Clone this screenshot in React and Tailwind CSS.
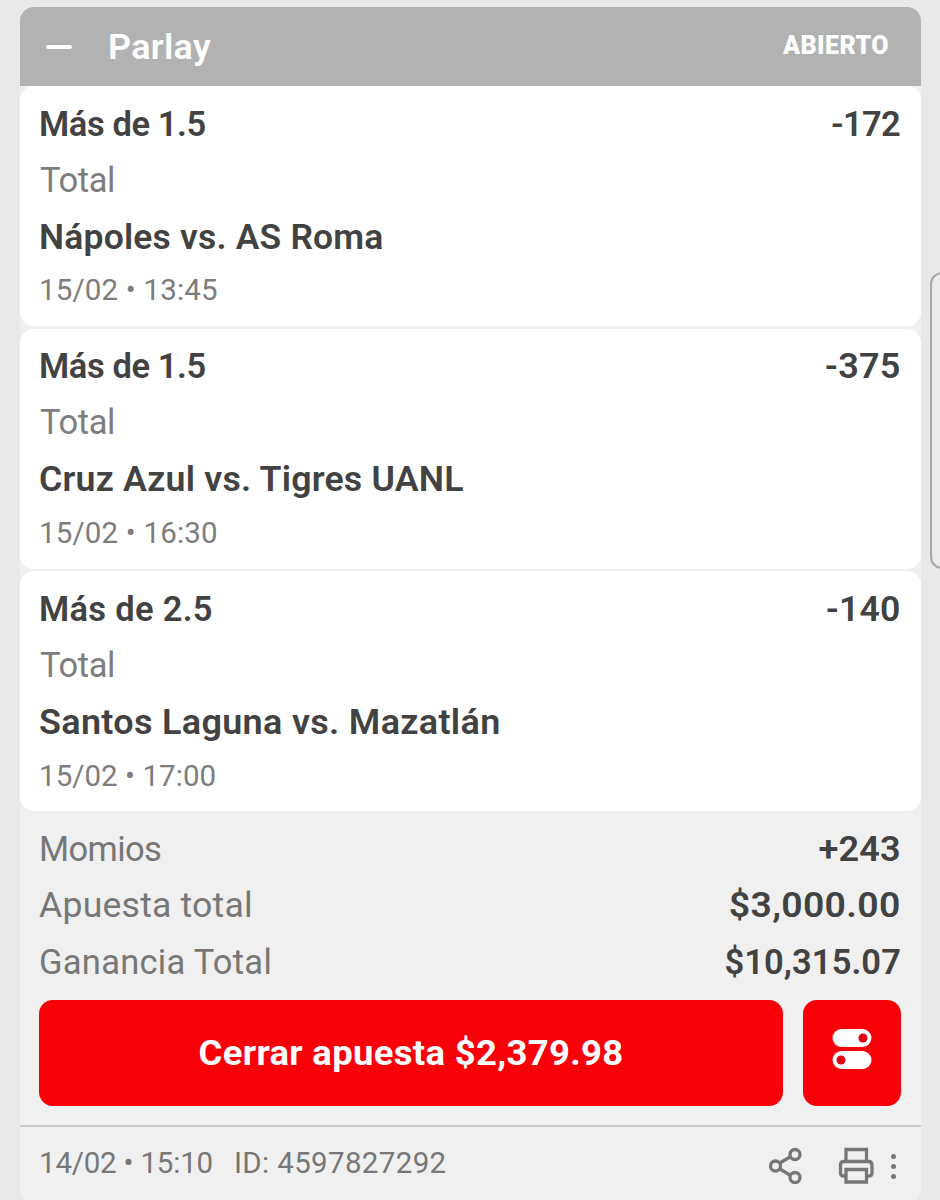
const selections = [
  { pick: "Más de 1.5", odds: "-172", market: "Total", match: "Nápoles vs. AS Roma", date: "15/02 • 13:45", pickClass: "tracking-[-0.4px]", oddsClass: "tracking-[-0.7px] mr-px", matchClass: "tracking-[0.2px] scale-x-[1.027]", dateClass: "tracking-[0.17px]" },
  { pick: "Más de 1.5", odds: "-375", market: "Total", match: "Cruz Azul vs. Tigres UANL", date: "15/02 • 16:30", pickClass: "tracking-[-0.4px]", oddsClass: "tracking-[0.2px] scale-x-[1.045]", matchClass: "tracking-[0.2px] scale-x-[1.035]", dateClass: "tracking-[0.17px]" },
  { pick: "Más de 2.5", odds: "-140", market: "Total", match: "Santos Laguna vs. Mazatlán", date: "15/02 • 17:00", pickClass: "tracking-[0.3px]", oddsClass: "tracking-[0.2px] scale-x-[1.03]", matchClass: "tracking-[0.3px] scale-x-[1.043]", dateClass: "tracking-[0.05px]" },
];

const totals = [
  { label: "Momios", value: "+243", labelClass: "tracking-[-0.6px]", valueClass: "tracking-[0.2px] scale-x-[1.045]" },
  { label: "Apuesta total", value: "$3,000.00", labelClass: "tracking-[0.2px] scale-x-[1.032]", valueClass: "tracking-[0.3px] scale-x-[1.083]" },
  { label: "Ganancia Total", value: "$10,315.07", labelClass: "tracking-[0.27px]", valueClass: "tracking-[0.1px]" },
];

const ShareIcon = () => (
  <svg width="36" height="38" viewBox="0 0 36 38" fill="none" stroke="#777" strokeWidth="3.3">
    <path d="M11 17.5 22 11M11 22.5 22 29" />
    <circle cx="7.5" cy="20" r="5" />
    <circle cx="27" cy="8.5" r="5" />
    <circle cx="27" cy="31.5" r="5" />
  </svg>
);

const PrintIcon = () => (
  <svg width="38" height="38" viewBox="0 0 38 38" fill="none" stroke="#777" strokeWidth="3.3">
    <path d="M9 15V3.5H29.5V15" />
    <path d="M9 30H6.5Q3.500 30 3.500 27V19Q3.500 15.500 7 15.500H31.500Q35 15.500 35 19V27Q35 30 32 30H29.500" />
    <path d="M9 23.5H29.5V36H9Z" />
  </svg>
);

const TogglesIcon = () => (
  <svg width="40" height="40" viewBox="0 0 40 40">
    <rect x="0.5" y="0" width="39" height="18" rx="9" fill="#fff" />
    <rect x="0.5" y="22" width="39" height="18" rx="9" fill="#fff" />
    <circle cx="31" cy="9" r="4.5" fill="#e3000f" />
    <circle cx="9" cy="31" r="4.5" fill="#e3000f" />
  </svg>
);

const Selection = ({ item }) => (
  <div className="h-[240px] bg-white rounded-[14px] pt-[9.6px] pl-[19px] pr-5 text-[34.5px]">
    <div className="flex justify-between leading-[56px] font-semibold text-[#424242]">
      <span className={item.pickClass}>{item.pick}</span>
      <span className={`origin-right ${item.oddsClass}`}>{item.odds}</span>
    </div>
    <p className="pl-px leading-[56px] text-[#7d7d7d] tracking-[-0.4px]">{item.market}</p>
    <p className={`origin-left leading-[58.6px] font-semibold text-[#424242] ${item.matchClass}`}>{item.match}</p>
    <p className={`leading-[49px] text-[29.5px] text-[#7d7d7d] ${item.dateClass}`}>{item.date}</p>
  </div>
);

const App = () => {
  return (
    <div className="relative w-[940px] h-[1200px] overflow-hidden bg-[#e9e9e9] pt-[7px] pl-5 font-['Roboto',sans-serif] whitespace-nowrap">
      <div className="w-[901px] h-[1196px] rounded-[14px] overflow-hidden bg-[#f0f0f0]">
        <div className="flex items-center h-[79px] bg-[#b2b2b2] text-white pl-[26px] pr-8">
          <div className="w-[26px] h-1 bg-white rounded-sm" />
          <h1 className="ml-9 pt-0.5 text-[34.5px] font-semibold tracking-[0.3px] origin-left scale-x-[1.04]">Parlay</h1>
          <span className="ml-auto -mt-0.5 text-[25px] font-black tracking-[0.4px]">ABIERTO</span>
        </div>

        <div className="flex flex-col gap-[2.7px]">
          {selections.map((item) => (
            <Selection key={item.match} item={item} />
          ))}
        </div>

        <div className="pt-[9.6px] pl-[19px] pr-5 text-[34.5px]">
          {totals.map((row) => (
            <div key={row.label} className="flex justify-between leading-[56.5px]">
              <span className={`origin-left text-[#777] ${row.labelClass}`}>{row.label}</span>
              <span className={`origin-right font-semibold text-[#424242] ${row.valueClass}`}>{row.value}</span>
            </div>
          ))}
        </div>

        <div className="flex gap-5 mt-[9.6px] pl-[19px] pr-5">
          <button className="w-[744px] h-[106px] pt-0.5 rounded-[14px] bg-[#f90009] text-white text-[34.5px] font-bold tracking-[0.3px]">
            <span className="inline-block scale-x-[1.057]">Cerrar apuesta $2,379.98</span>
          </button>
          <button className="flex items-center justify-center w-[98px] h-[106px] pb-2 rounded-[14px] bg-[#f90009]">
            <TogglesIcon />
          </button>
        </div>

        <div className="flex items-center mt-[18.9px] h-[75px] border-t-2 border-[#cacaca] pl-[19px] text-[29.5px] text-[#777]">
          <span className="tracking-[-0.2px]">14/02 • 15:10</span>
          <span className="ml-[21px] tracking-[0.35px]">ID: 4597827292</span>
          <div className="flex items-center ml-auto pr-[25px] pt-1">
            <ShareIcon />
            <div className="ml-[33px]">
              <PrintIcon />
            </div>
            <div className="flex flex-col gap-[5px] ml-4 pt-0.5">
              <span className="w-[5px] h-[5px] rounded-full bg-[#777]" />
              <span className="w-[5px] h-[5px] rounded-full bg-[#777]" />
              <span className="w-[5px] h-[5px] rounded-full bg-[#777]" />
            </div>
          </div>
        </div>
      </div>

      {/* scroll handle cut off by the right edge */}
      <div className="absolute left-[930px] top-[272px] w-10 h-[297px] rounded-[12px] border-2 border-[#a6a6a6] bg-[#ebebeb]" />
    </div>
  );
};

export default App;
